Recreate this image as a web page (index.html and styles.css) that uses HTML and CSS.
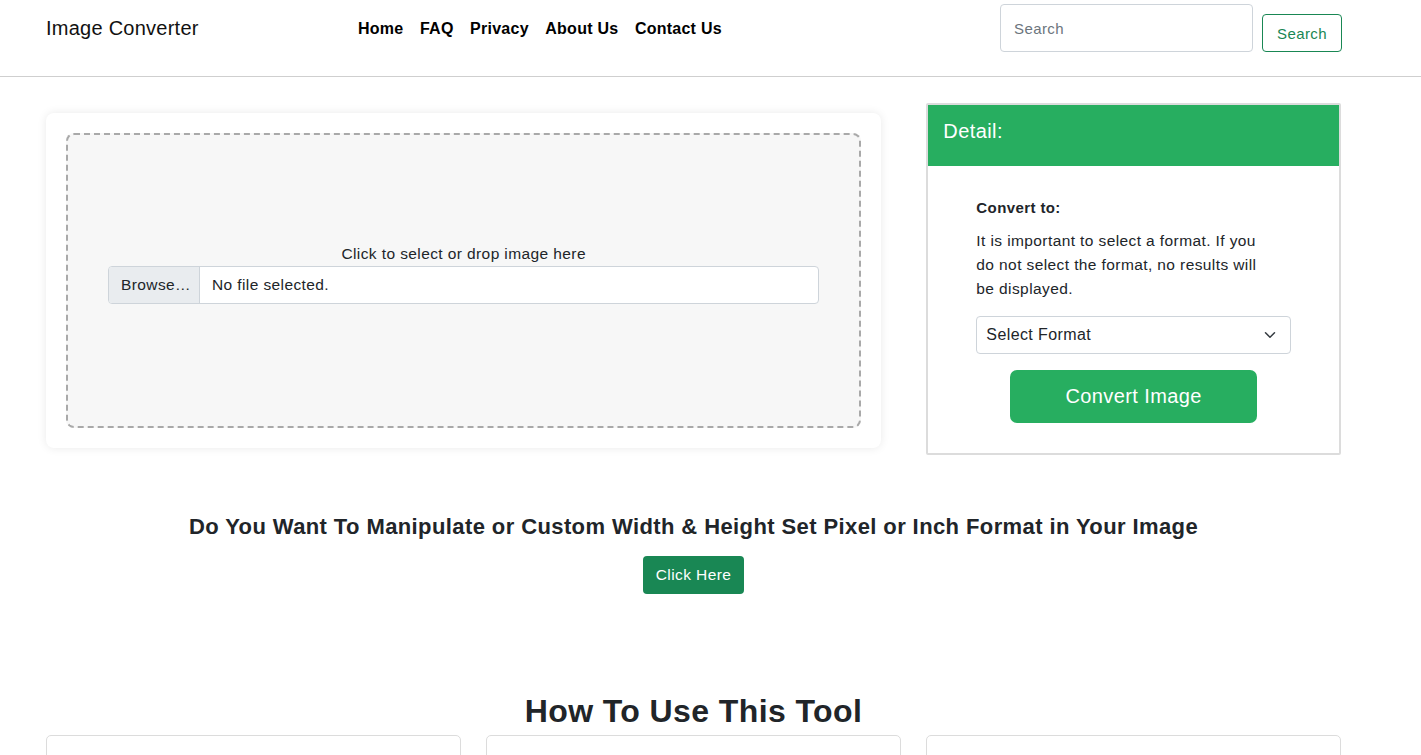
FILE: index.html
```html
<!DOCTYPE html>
<html lang="en">
<head>
<meta charset="utf-8">
<title>Image Converter</title>
<link rel="stylesheet" href="styles.css">
</head>
<body>
<header class="navbar">
  <div class="nav-inner">
    <a class="brand" href="#">Image Converter</a>
    <nav class="nav-links">
      <a href="#">Home</a>
      <a href="#">FAQ</a>
      <a href="#">Privacy</a>
      <a href="#">About Us</a>
      <a href="#">Contact Us</a>
    </nav>
    <form class="search">
      <input class="search-input" type="text" placeholder="Search">
      <button class="search-btn" type="button">Search</button>
    </form>
  </div>
</header>

<main class="container">
  <section class="tool-row">
    <div class="upload-card">
      <div class="drop-zone">
        <div class="drop-label">Click to select or drop image here</div>
        <div class="file-input">
          <span class="file-btn">Browse…</span>
          <span class="file-name">No file selected.</span>
        </div>
      </div>
    </div>
    <div class="detail-card">
      <div class="detail-head">Detail:</div>
      <div class="detail-body">
        <div class="convert-label">Convert to:</div>
        <p class="convert-note">It is important to select a format. If you do not select the format, no results will be displayed.</p>
        <div class="select">
          <span>Select Format</span>
          <svg width="12" height="12" viewBox="0 0 16 16"><path d="M2 5l6 6 6-6" fill="none" stroke="#343a40" stroke-width="2" stroke-linecap="round" stroke-linejoin="round"/></svg>
        </div>
        <button class="convert-btn" type="button">Convert Image</button>
      </div>
    </div>
  </section>

  <section class="promo">
    <h2 class="promo-title">Do You Want To Manipulate or Custom Width &amp; Height Set Pixel or Inch Format in Your Image</h2>
    <button class="click-btn" type="button">Click Here</button>
  </section>

  <section class="howto">
    <h2 class="howto-title">How To Use This Tool</h2>
    <div class="howto-grid">
      <div class="howto-card"></div>
      <div class="howto-card"></div>
      <div class="howto-card"></div>
    </div>
  </section>
</main>
</body>
</html>
```

FILE: styles.css
```css
* { box-sizing: border-box; }
html, body { margin: 0; padding: 0; }
body {
  font-family: "Liberation Sans", Arial, sans-serif;
  color: #212529;
  background: #fff;
  font-size: 16px;
  letter-spacing: 0.4px;
  overflow: hidden;
}
a { text-decoration: none; color: inherit; }
button, input { letter-spacing: inherit; }

.navbar {
  height: 77px;
  border-bottom: 1px solid #cfcfcf;
}
.nav-inner {
  display: flex;
  align-items: flex-start;
  padding: 0 79px 0 46px;
  height: 100%;
}
.brand {
  font-size: 20px;
  letter-spacing: 0.25px;
  color: #111;
  margin-top: 17px;
  width: 312px;
}
.nav-links {
  display: flex;
  gap: 16.5px;
  margin-top: 20px;
  font-weight: bold;
  font-size: 16px;
  letter-spacing: 0.25px;
  color: #000;
}
.search {
  margin-left: auto;
  display: flex;
  align-items: flex-start;
  gap: 9px;
  margin-top: 4px;
}
.search-input {
  width: 253px;
  height: 48px;
  border: 1px solid #ced4da;
  border-radius: 4px;
  padding: 0 13px;
  font-family: inherit;
  font-size: 15px;
  color: #212529;
}
.search-input::placeholder { color: #6c757d; }
.search-btn {
  margin-top: 10px;
  height: 38px;
  width: 80px;
  background: #fff;
  border: 1px solid #198754;
  color: #198754;
  border-radius: 4px;
  font-family: inherit;
  font-size: 15px;
  padding: 1px 0 0;
}

.container {
  padding: 0 80px 0 46px;
}
.tool-row {
  display: flex;
  align-items: flex-start;
  gap: 45px;
  margin-top: 26px;
}
.upload-card {
  margin-top: 10px;
  width: 836px;
  background: #fff;
  border-radius: 8px;
  box-shadow: 0 0 10px rgba(0,0,0,0.09);
  padding: 20px;
}
.drop-zone {
  height: 295px;
  background: #f7f7f7;
  border: 2px dashed #a9a9a9;
  border-radius: 8px;
  display: flex;
  flex-direction: column;
  align-items: center;
  justify-content: center;
  padding: 0 40px 12px;
}
.drop-label {
  font-size: 15.5px;
  margin-bottom: 3px;
}
.file-input {
  display: flex;
  width: 100%;
  height: 38px;
  border: 1px solid #ced4da;
  border-radius: 4px;
  background: #fff;
  overflow: hidden;
  font-size: 15.5px;
}
.file-btn {
  display: flex;
  align-items: center;
  padding: 0 12px;
  background: #e9ecef;
  border-right: 1px solid #ced4da;
  width: 91px;
}
.file-name {
  display: flex;
  align-items: center;
  padding: 0 12px;
}

.detail-card {
  width: 415px;
  border: 2px solid #dcdcdc;
  border-radius: 2px;
  background: #fff;
}
.detail-head {
  background: #27ae60;
  color: #fff;
  height: 61px;
  font-size: 20px;
  padding: 15px 15px 0;
}
.detail-body {
  padding: 33px 48px 30px;
  display: flex;
  flex-direction: column;
}
.convert-label {
  font-weight: bold;
  font-size: 15px;
}
.convert-note {
  margin: 13px 0 15px;
  font-size: 15.5px;
  line-height: 24px;
  padding-right: 14px;
}
.select {
  height: 38px;
  border: 1px solid #ced4da;
  border-radius: 4px;
  display: flex;
  align-items: center;
  justify-content: space-between;
  padding: 0 14px 0 9px;
  font-size: 16px;
}
.convert-btn {
  margin: 16px auto 0;
  width: 247px;
  height: 53px;
  background: #27ae60;
  color: #fff;
  border: none;
  border-radius: 7px;
  font-family: inherit;
  font-size: 20px;
}

.promo {
  text-align: center;
  margin-top: 58px;
}
.promo-title {
  margin: 0;
  font-size: 22px;
  font-weight: bold;
  line-height: 28px;
}
.click-btn {
  margin-top: 15px;
  height: 38px;
  width: 101px;
  background: #198754;
  color: #fff;
  border: none;
  border-radius: 4px;
  font-family: inherit;
  font-size: 15.5px;
}

.howto {
  margin-top: 98px;
}
.howto-title {
  text-align: center;
  margin: 0;
  font-size: 32px;
  font-weight: bold;
  line-height: 38px;
}
.howto-grid {
  display: grid;
  grid-template-columns: repeat(3, 1fr);
  gap: 25px;
  margin-top: 5px;
}
.howto-card {
  height: 120px;
  border: 1px solid #dcdcdc;
  border-radius: 5px;
}
```
